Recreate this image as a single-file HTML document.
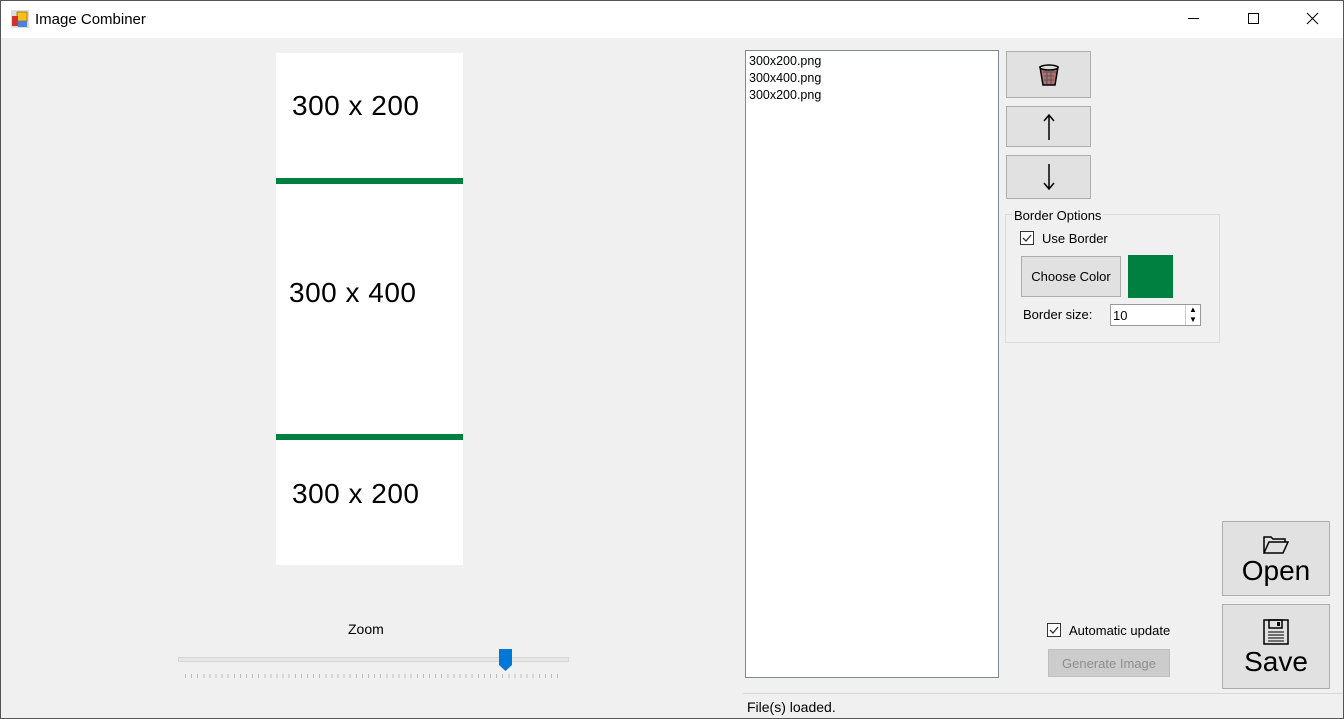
<!DOCTYPE html><html><head><style>
body{margin:0;width:1344px;height:719px;overflow:hidden;font-family:"Liberation Sans",sans-serif;font-size:13px;color:#000;background:#f0f0f0;position:relative}
.a{position:absolute;box-sizing:border-box}
.btn{background:#e1e1e1;border:1px solid #adadad;display:flex;align-items:center;justify-content:center}
.cb{width:14px;height:14px;border:1px solid #333;background:#fff;display:flex;align-items:center;justify-content:center}
</style></head><body>
<div class="a" style="left:0;top:0;width:1344px;height:719px;border:1px solid #555;pointer-events:none;z-index:9"></div>
<div class="a" style="left:0;top:0;width:1344px;height:38px;background:#fff"></div>
<svg class="a" style="left:11px;top:10px" width="18" height="18"><rect x="0" y="0" width="18" height="18" fill="#ddd"/><rect x="6" y="2" width="10" height="9" fill="#f4c020" stroke="#b08000"/><rect x="1" y="6" width="6" height="10" fill="#d03030"/><rect x="7" y="11" width="9" height="6" fill="#4a80e0"/></svg>
<div class="a" style="left:35px;top:11px;font-size:15px">Image Combiner</div>
<div class="a" style="left:1188px;top:18px;width:11px;height:1px;background:#000"></div>
<div class="a" style="left:1248px;top:13px;width:11px;height:11px;border:1px solid #000"></div>
<svg class="a" style="left:1306px;top:12px" width="13" height="13"><path d="M1 1L12 12M12 1L1 12" stroke="#000"/></svg>

<div class="a" style="left:276px;top:53px;width:187px;height:512px;background:#fff"></div>
<div class="a" style="left:276px;top:178px;width:187px;height:6px;background:#008040"></div>
<div class="a" style="left:276px;top:434px;width:187px;height:6px;background:#008040"></div>
<div class="a" style="left:292px;top:90px;font-size:28px;letter-spacing:0.5px">300 x 200</div>
<div class="a" style="left:289px;top:277px;font-size:28px;letter-spacing:0.5px">300 x 400</div>
<div class="a" style="left:292px;top:478px;font-size:28px;letter-spacing:0.5px">300 x 200</div>

<div class="a" style="left:348px;top:621px;font-size:14px">Zoom</div>
<div class="a" style="left:178px;top:657px;width:391px;height:5px;background:#e7e7e7;border:1px solid #d6d6d6"></div>
<svg class="a" style="left:499px;top:649px" width="14" height="23"><path d="M0 0H13V16L6.5 22L0 16Z" fill="#0078d7"/></svg>
<div class="a" style="left:185px;top:674px;width:378px;height:4px;background:repeating-linear-gradient(90deg,#bbb 0 1px,transparent 1px 6.1px)"></div>

<div class="a" style="left:745px;top:50px;width:254px;height:628px;background:#fff;border:1px solid #828790;padding:2px 3px;line-height:17px;font-size:12.5px">300x200.png<br>300x400.png<br>300x200.png</div>

<div class="a btn" style="left:1006px;top:51px;width:85px;height:47px"><svg width="20" height="22"><path d="M1 3H19L16 21H4Z" fill="#b07070" stroke="#000" stroke-width="1.5"/><ellipse cx="10" cy="3.5" rx="9" ry="2.5" fill="#ddd" stroke="#000" stroke-width="1.5"/><path d="M4 8H17M5 12H15M5 16H15M8 6V20M12 6V20" stroke="#555" stroke-width="1"/></svg></div>
<div class="a btn" style="left:1006px;top:106px;width:85px;height:41px"><svg width="12" height="28"><path d="M6 27V2M1 8L6 2L11 8" stroke="#000" stroke-width="1.5" fill="none"/></svg></div>
<div class="a btn" style="left:1006px;top:155px;width:85px;height:44px"><svg width="12" height="28"><path d="M6 1V26M1 20L6 26L11 20" stroke="#000" stroke-width="1.5" fill="none"/></svg></div>

<div class="a" style="left:1005px;top:214px;width:215px;height:129px;border:1px solid #dcdcdc"></div>
<div class="a" style="left:1012px;top:208px;background:#f0f0f0;padding:0 2px">Border Options</div>
<div class="a cb" style="left:1020px;top:231px"><svg width="12" height="12"><path d="M2 6L5 9L10 3" stroke="#333" fill="none" stroke-width="1.3"/></svg></div>
<div class="a" style="left:1042px;top:231px">Use Border</div>
<div class="a btn" style="left:1021px;top:256px;width:100px;height:41px">Choose Color</div>
<div class="a" style="left:1128px;top:255px;width:45px;height:43px;background:#008040"></div>
<div class="a" style="left:1023px;top:307px">Border size:</div>
<div class="a" style="left:1110px;top:304px;width:91px;height:22px;background:#fff;border:1px solid #999;padding:3px 2px">10</div>
<div class="a" style="left:1185px;top:305px;width:15px;height:20px;border-left:1px solid #ccc;font-size:8px;line-height:10px;text-align:center">▲<br>▼</div>

<div class="a cb" style="left:1047px;top:623px"><svg width="12" height="12"><path d="M2 6L5 9L10 3" stroke="#333" fill="none" stroke-width="1.3"/></svg></div>
<div class="a" style="left:1069px;top:623px">Automatic update</div>
<div class="a" style="left:1048px;top:649px;width:122px;height:28px;background:#ccc;border:1px solid #bfbfbf;color:#8d8d8d;display:flex;align-items:center;justify-content:center">Generate Image</div>

<div class="a btn" style="left:1222px;top:521px;width:108px;height:75px;flex-direction:column;font-size:28px;padding-top:4px"><svg width="26" height="20"><path d="M1 3H8L10 5H22V8H6L1 19Z M1 19L6 8H25L20 19Z" fill="none" stroke="#000" stroke-width="1.5"/></svg><span style="line-height:34px">Open</span></div>
<div class="a btn" style="left:1222px;top:604px;width:108px;height:85px;flex-direction:column;font-size:28px;padding-top:4px"><svg width="26" height="26"><rect x="1" y="1" width="24" height="24" fill="none" stroke="#000" stroke-width="1.5"/><rect x="6" y="1" width="13" height="8" fill="none" stroke="#000" stroke-width="1.5"/><rect x="14" y="3" width="3" height="4" fill="#000"/><path d="M5 13H21M5 16H21M5 19H21M5 22H21" stroke="#000"/></svg><span style="line-height:34px">Save</span></div>

<div class="a" style="left:743px;top:693px;width:600px;height:1px;background:#d7d7d7"></div>
<div class="a" style="left:747px;top:699px;font-size:14px">File(s) loaded.</div>
</body></html>
